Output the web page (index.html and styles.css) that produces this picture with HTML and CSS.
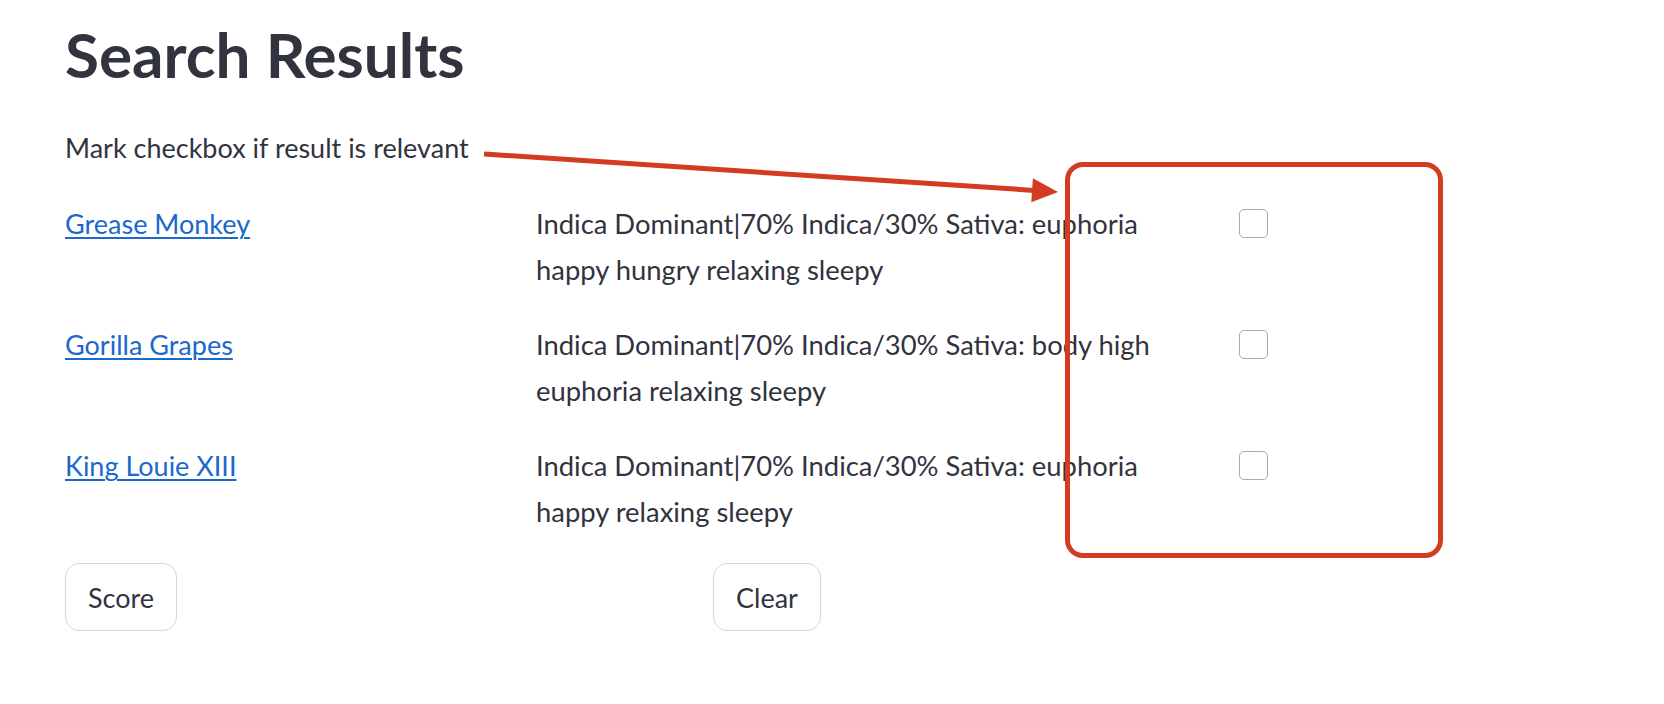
FILE: index.html
```html
<!DOCTYPE html>
<html lang="en">
<head>
<meta charset="utf-8">
<title>Search Results</title>
<link rel="stylesheet" href="styles.css">
</head>
<body>
<main class="page">
  <h1 class="title">Search Results</h1>
  <p class="hint">Mark checkbox if result is relevant</p>

  <section class="results">
    <div class="row">
      <div class="cell"><a class="name" href="#">Grease Monkey</a></div>
      <p class="desc">Indica Dominant|70% Indica/30% Sativa: euphoria happy hungry relaxing sleepy</p>
      <label class="check"><input type="checkbox" class="box"></label>
    </div>
    <div class="row">
      <div class="cell"><a class="name" href="#">Gorilla Grapes</a></div>
      <p class="desc">Indica Dominant|70% Indica/30% Sativa: body high euphoria relaxing sleepy</p>
      <label class="check"><input type="checkbox" class="box"></label>
    </div>
    <div class="row">
      <div class="cell"><a class="name" href="#">King Louie XIII</a></div>
      <p class="desc">Indica Dominant|70% Indica/30% Sativa: euphoria happy relaxing sleepy</p>
      <label class="check"><input type="checkbox" class="box"></label>
    </div>
  </section>

  <div class="actions">
    <div class="action-col"><button class="btn" type="button">Score</button></div>
    <div class="action-col"><button class="btn" type="button">Clear</button></div>
  </div>

  <div class="annot-box"></div>
  <svg class="annot-arrow" width="1664" height="704" viewBox="0 0 1664 704" aria-hidden="true">
    <line x1="484" y1="154" x2="1034" y2="190.4" stroke="#d33b23" stroke-width="5"/>
    <polygon points="1058,192 1032.9,178.3 1031.3,202.3" fill="#d33b23"/>
  </svg>
</main>
</body>
</html>
```

FILE: styles.css
```css
* { box-sizing: border-box; }

html, body {
  margin: 0;
  padding: 0;
  background: #ffffff;
}

body {
  font-family: Lato, "Liberation Sans", sans-serif;
  color: #31333f;
}

.page {
  position: relative;
  width: 1664px;
  height: 704px;
  padding: 17px 65px 0 65px;
  overflow: hidden;
}

.title {
  margin: 0;
  font-size: 62px;
  line-height: 1.2;
  font-weight: 700;
  color: #31333f;
}

.hint {
  margin: 34px 0 0 0;
  font-size: 27px;
  line-height: 45px;
}

.results {
  margin-top: 31px;
  display: flex;
  flex-direction: column;
  gap: 29px;
}

.row {
  display: grid;
  grid-template-columns: 443px 675px 1fr;
  column-gap: 28px;
  min-height: 92px;
}

.cell {
  font-size: 27px;
  line-height: 46px;
}

.name {
  color: #1c68cc;
  text-decoration: underline;
  text-decoration-thickness: 2px;
  text-underline-offset: 3px;
}

.desc {
  margin: 0;
  max-width: 640px;
  font-size: 27.4px;
  line-height: 46px;
}

.check {
  display: block;
  padding-top: 8px;
}

.box {
  appearance: none;
  -webkit-appearance: none;
  display: block;
  margin: 0;
  width: 29px;
  height: 29px;
  border: 1.5px solid #a9a9ae;
  border-radius: 5px;
  background: #ffffff;
}

.actions {
  margin-top: 28px;
  display: grid;
  grid-template-columns: 620px 1fr;
  column-gap: 28px;
}

.btn {
  height: 68px;
  padding: 0 22px;
  font-family: Lato, "Liberation Sans", sans-serif;
  font-size: 27px;
  color: #31333f;
  background: #ffffff;
  border: 1px solid #d5d6d9;
  border-radius: 14px;
}

.annot-box {
  position: absolute;
  left: 1065px;
  top: 162px;
  width: 378px;
  height: 396px;
  border: 5px solid #d33b23;
  border-radius: 18px;
  pointer-events: none;
}

.annot-arrow {
  position: absolute;
  left: 0;
  top: 0;
  pointer-events: none;
}
```
